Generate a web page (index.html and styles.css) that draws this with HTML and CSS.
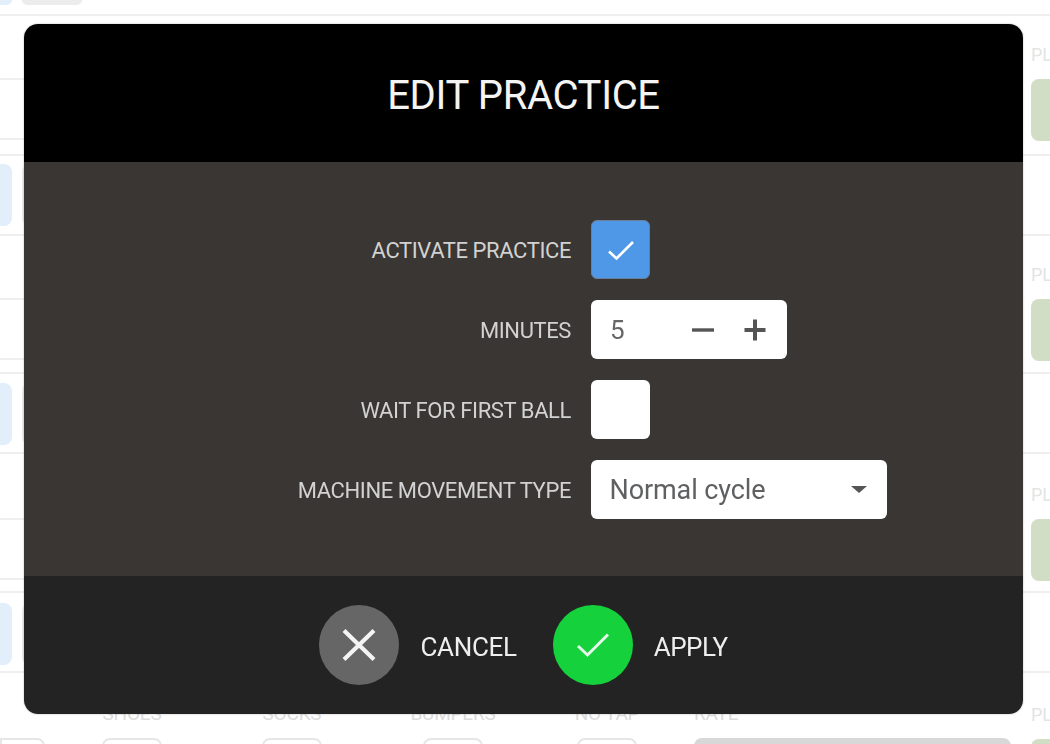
FILE: index.html
```html
<!DOCTYPE html>
<html lang="en">
<head>
<meta charset="utf-8">
<title>Edit practice</title>
<link rel="stylesheet" href="styles.css">
</head>
<body>
<div class="page">
  <div class="strip">
    <div class="tiles tiles-top"><span class="tile tile-blue"></span><span class="tile tile-grey"></span></div>
  </div>
  <section class="sec sec-a">
    <div class="sub"><div class="sub-row"></div><div class="sub-row sub-row-short"></div></div>
    <div class="pl"><div class="pl-label">PLAYER</div><div class="pl-tile"></div></div>
  </section>
  <div class="tiles-row"><div class="tiles"><span class="tile tile-blue"></span><span class="tile tile-grey"></span></div></div>
  <section class="sec sec-c">
    <div class="sub"><div class="sub-row"></div><div class="sub-row sub-row-short"></div></div>
    <div class="pl"><div class="pl-label">PLAYER</div><div class="pl-tile"></div></div>
  </section>
  <div class="tiles-row tiles-row-b"><div class="tiles"><span class="tile tile-blue"></span><span class="tile tile-grey"></span></div></div>
  <section class="sec sec-d">
    <div class="sub"><div class="sub-row sub-row-tall"></div><div class="sub-row sub-row-short"></div></div>
    <div class="pl pl-low"><div class="pl-label">PLAYER</div><div class="pl-tile"></div></div>
  </section>
  <div class="tiles-row tiles-row-c"><div class="tiles"><span class="tile tile-blue"></span><span class="tile tile-grey"></span></div></div>
  <section class="sec-e">
    <div class="fields">
      <div class="field field-first"><span class="f-label">&nbsp;</span><span class="f-box"></span></div>
      <div class="field field-shoes"><span class="f-label">SHOES</span><span class="f-box"></span></div>
      <div class="field field-socks"><span class="f-label">SOCKS</span><span class="f-box"></span></div>
      <div class="field field-bumpers"><span class="f-label">BUMPERS</span><span class="f-box"></span></div>
      <div class="field field-notap"><span class="f-label">NO TAP</span><span class="f-box"></span></div>
      <div class="field field-rate"><span class="f-label">RATE</span><span class="f-box f-box-grey"></span></div>
    </div>
    <div class="pl pl-last"><div class="pl-label">PLAYER</div><div class="pl-tile"></div></div>
  </section>
</div>

<div class="modal">
  <header class="modal-head"><h1 class="modal-title">EDIT PRACTICE</h1></header>
  <div class="modal-body">
    <div class="form">
      <label class="form-label">ACTIVATE PRACTICE</label>
      <div class="check check-on">
        <svg class="check-icon" viewBox="0 0 28 22" width="28" height="22"><path d="M2 12.5 L9.5 19.5 L26 3" fill="none" stroke="#fff" stroke-width="2.6"/></svg>
      </div>
      <label class="form-label">MINUTES</label>
      <div class="stepper">
        <span class="stepper-val">5</span>
        <svg class="stepper-icon" viewBox="0 0 24 24" width="24" height="24"><path d="M1 12 H23" fill="none" stroke="#555" stroke-width="3.4"/></svg>
        <svg class="stepper-icon" viewBox="0 0 24 24" width="24" height="24"><path d="M1.500 12 H22.500 M12 1.500 V22.500" fill="none" stroke="#555" stroke-width="4"/></svg>
      </div>
      <label class="form-label">WAIT FOR FIRST BALL</label>
      <div class="check"></div>
      <label class="form-label">MACHINE MOVEMENT TYPE</label>
      <div class="select">
        <span class="select-val">Normal cycle</span>
        <span class="select-caret"></span>
      </div>
    </div>
  </div>
  <footer class="modal-foot">
    <div class="action">
      <span class="circle circle-grey">
        <svg viewBox="0 0 34 32" width="34" height="32"><path d="M2 1.500 L32 30.500 M32 1.500 L2 30.500" fill="none" stroke="#f4f4f4" stroke-width="4.200"/></svg>
      </span>
      <span class="action-text">CANCEL</span>
    </div>
    <div class="action">
      <span class="circle circle-green">
        <svg viewBox="0 0 34 26" width="34" height="26"><path d="M2 14 L11.500 23 L32 2.500" fill="none" stroke="#e4f7e8" stroke-width="3"/></svg>
      </span>
      <span class="action-text action-text-tight">APPLY</span>
    </div>
  </footer>
</div>
</body>
</html>
```
FILE: styles.css
```css
* { box-sizing: border-box; }
html, body { margin: 0; padding: 0; height: 100%; }
body {
  background: #fff;
  font-family: Roboto, "Liberation Sans", sans-serif;
  overflow: hidden;
}
.page {
  width: 1050px;
  height: 744px;
  overflow: hidden;
  display: flex;
  flex-direction: column;
}
/* background rows */
.strip { height: 16px; border-bottom: 2px solid #efefef; flex: none; }
.tiles { display: flex; gap: 10px; margin-left: -48px; }
.tiles-top { height: 5px; }
.tile { display: block; width: 60px; height: 62px; border-radius: 8px; }
.tiles-top .tile { height: 5px; border-radius: 0 0 8px 8px; }
.tile-blue { background: #e3eefb; }
.tile-grey { background: #ececec; }
.sec { display: flex; flex: none; justify-content: space-between; border-bottom: 2px solid #efefef; }
.sec-a { height: 140px; }
.sec-c { height: 138px; }
.sec-d { height: 139px; }
.sub { width: 1000px; }
.sub-row { height: 64px; border-bottom: 2px solid #efefef; }
.sub-row-tall { height: 66px; }
.sub-row-short { height: 60px; }
.pl { width: 19px; overflow: hidden; padding-top: 31px; flex: none; }
.pl-low { padding-top: 33px; }
.pl-last { padding-top: 34px; }
.pl-label { font-size: 18px; line-height: 16px; height: 16px; color: #e4e4e4; white-space: nowrap; }
.pl-tile { margin-top: 16px; width: 60px; height: 62px; border-radius: 8px; background: #d2ddc6; }
.tiles-row { height: 80px; padding-top: 8px; flex: none; border-bottom: 2px solid #efefef; }
.tiles-row-b { padding-top: 9px; }
.tiles-row-c { padding-top: 10px; }
.sec-e { display: flex; justify-content: space-between; flex: none; height: 80px; }
.fields { display: flex; align-items: flex-start; padding-top: 33px; width: 1011px; }
.field { width: 60px; flex: none; display: flex; flex-direction: column; align-items: center; }
.f-label { font-size: 19px; letter-spacing: -0.2px; line-height: 16px; height: 16px; color: #dcdcdc; white-space: nowrap; }
.f-box { display: block; width: 100%; height: 40px; margin-top: 16px; border: 2px solid #e6e6e6; border-radius: 8px; background: #fff; }
.field-first { width: 45px; }
.field-first .f-box { border-radius: 0 8px 8px 0; }
.field-shoes { margin-left: 57px; }
.field-socks { margin-left: 100px; }
.field-bumpers { margin-left: 101px; }
.field-notap { margin-left: 94px; }
.field-rate { margin-left: 57px; width: 317px; align-items: flex-start; }
.f-box-grey { background: #d8d8d8; border-color: #d8d8d8; }

/* modal overlay */
.modal {
  position: fixed;
  left: 24px;
  top: 24px;
  width: 999px;
  height: 690px;
  border-radius: 14px;
  overflow: hidden;
  display: flex;
  flex-direction: column;
  box-shadow: 0 0 2px rgba(0,0,0,.3);
}
.modal-head {
  height: 138px;
  background: #000;
  display: flex;
  align-items: center;
  justify-content: center;
  flex: none;
  padding-top: 5px;
}
.modal-title {
  margin: 0;
  color: #f4f4f4;
  font-size: 40px;
  font-weight: 400;
  letter-spacing: -0.35px;
}
.modal-body { flex: 1; background: #3a3633; padding-top: 58px; }
.form {
  display: grid;
  grid-template-columns: 547px auto;
  justify-content: start;
  align-items: center;
  column-gap: 20px;
  row-gap: 21px;
}
.form-label {
  text-align: right;
  color: #d2d2d2;
  font-size: 22px;
  letter-spacing: -0.4px;
  white-space: nowrap;
  padding-top: 2px;
}
.check {
  width: 59px;
  height: 59px;
  background: #fff;
  border-radius: 6px;
  display: flex;
  align-items: center;
  justify-content: center;
}
.check-on { background: #4f98e8; border: 1px solid #6b7f98; }
.stepper {
  width: 196px;
  height: 59px;
  background: #fff;
  border-radius: 6px;
  display: flex;
  align-items: center;
  padding: 0 20px 0 19px;
}
.stepper-val { flex: 1; color: #666; font-size: 26px; }
.stepper-icon { margin-left: 28px; flex: none; }
.stepper-val + .stepper-icon { margin-left: 0; }
.select {
  width: 296px;
  height: 59px;
  background: #fff;
  border-radius: 6px;
  display: flex;
  align-items: center;
  justify-content: space-between;
  padding: 0 20px 0 18.500px;
}
.select-val { color: #5f6062; font-size: 27px; letter-spacing: -0.1px; }
.select-caret {
  width: 0;
  height: 0;
  border-left: 8px solid transparent;
  border-right: 8px solid transparent;
  border-top: 7px solid #555;
}
.modal-foot {
  height: 138px;
  flex: none;
  background: #232323;
  display: flex;
  align-items: center;
  justify-content: center;
  gap: 36px;
}
.action { display: flex; align-items: center; gap: 21px; }
.circle {
  width: 80px;
  height: 80px;
  border-radius: 50%;
  display: flex;
  align-items: center;
  justify-content: center;
}
.circle-grey { background: #666; }
.circle-green { background: #14d13c; }
.action-text { color: #eee; font-size: 26px; letter-spacing: -0.3px; padding-top: 4px; }
.action-text-tight { letter-spacing: -0.5px; }
```
